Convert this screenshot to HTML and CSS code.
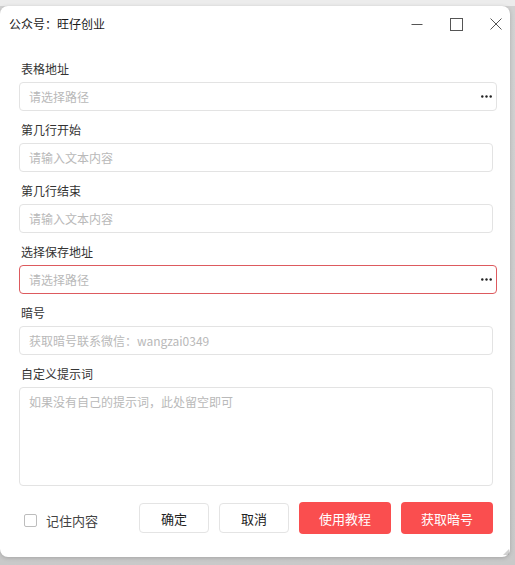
FILE: index.html
```html
<!DOCTYPE html>
<html lang="zh-CN">
<head>
<meta charset="utf-8">
<title>公众号：旺仔创业</title>
<link rel="stylesheet" href="styles.css">
</head>
<body>
<div class="window">
  <div class="titlebar">
    <div class="title">公众号：旺仔创业</div>
    <div class="controls">
      <svg class="ctl" width="12" height="12" viewBox="0 0 12 12"><path d="M0.5 6.5h11" stroke="#555" stroke-width="1"/></svg>
      <svg class="ctl" width="13" height="13" viewBox="0 0 13 13"><rect x="0.5" y="0.5" width="12" height="12" fill="none" stroke="#555" stroke-width="1"/></svg>
      <svg class="ctl" width="12" height="12" viewBox="0 0 12 12"><path d="M0.5 0.5l11 11M11.5 0.5l-11 11" stroke="#555" stroke-width="1"/></svg>
    </div>
  </div>
  <div class="form">
    <div class="field">
      <div class="label">表格地址</div>
      <div class="input wide"><span class="ph">请选择路径</span><svg class="dots" width="11" height="3" viewBox="0 0 11 3"><circle cx="1.3" cy="1.5" r="1.2"/><circle cx="5.5" cy="1.5" r="1.2"/><circle cx="9.7" cy="1.5" r="1.2"/></svg></div>
    </div>
    <div class="field">
      <div class="label">第几行开始</div>
      <div class="input"><span class="ph">请输入文本内容</span></div>
    </div>
    <div class="field">
      <div class="label">第几行结束</div>
      <div class="input"><span class="ph">请输入文本内容</span></div>
    </div>
    <div class="field">
      <div class="label">选择保存地址</div>
      <div class="input wide error"><span class="ph">请选择路径</span><svg class="dots" width="11" height="3" viewBox="0 0 11 3"><circle cx="1.3" cy="1.5" r="1.2"/><circle cx="5.5" cy="1.5" r="1.2"/><circle cx="9.7" cy="1.5" r="1.2"/></svg></div>
    </div>
    <div class="field">
      <div class="label">暗号</div>
      <div class="input"><span class="ph">获取暗号联系微信：wangzai0349</span></div>
    </div>
    <div class="field">
      <div class="label">自定义提示词</div>
      <div class="input textarea"><span class="ph">如果没有自己的提示词，此处留空即可</span></div>
    </div>
    <div class="actions">
      <label class="remember"><span class="box"></span><span>记住内容</span></label>
      <div class="buttons">
        <button class="btn plain">确定</button>
        <button class="btn plain">取消</button>
        <button class="btn primary">使用教程</button>
        <button class="btn primary">获取暗号</button>
      </div>
    </div>
  </div>
  <div class="grip"></div>
</div>
</body>
</html>
```
FILE: styles.css
```css
html, body {
  margin: 0;
  padding: 0;
}
body {
  width: 515px;
  height: 565px;
  overflow: hidden;
  background: linear-gradient(#ececec 0, #ececec 6px, #d2d2d2 6px, #c9c9c9 100%);
  font-family: "Noto Sans CJK SC", "Noto Sans", sans-serif;
  color: #333;
}
.window {
  position: relative;
  margin-top: 6px;
  width: 510px;
  height: 551px;
  background: #fff;
  border-radius: 8px;
  box-shadow: 0 1px 4px rgba(0,0,0,0.18);
  display: flex;
  flex-direction: column;
}
.titlebar {
  height: 36px;
  display: flex;
  align-items: center;
  justify-content: space-between;
  padding-left: 9px;
  padding-right: 8px;
}
.title {
  font-size: 12px;
  color: #1a1a1a;
  line-height: 16px;
}
.controls {
  display: flex;
  align-items: center;
  gap: 27px;
}
.ctl {
  display: block;
}
.form {
  padding: 17px 0 0 19px;
  display: flex;
  flex-direction: column;
}
.field {
  display: flex;
  flex-direction: column;
  gap: 3px;
  margin-bottom: 9px;
}
.label {
  height: 20px;
  line-height: 20px;
  font-size: 12px;
  color: #333;
  padding-left: 2px;
}
.input {
  box-sizing: border-box;
  width: 474px;
  height: 29px;
  border: 1px solid #e3e3e3;
  border-radius: 4px;
  display: flex;
  align-items: center;
  justify-content: space-between;
  padding: 0 4px 0 9px;
}
.input.wide {
  width: 478px;
}
.input.error {
  border-color: #dd5a5e;
}
.input.textarea {
  height: 99px;
  align-items: flex-start;
  padding-top: 5px;
}
.ph {
  font-size: 12px;
  color: #b9b9b9;
  line-height: 18px;
}
.dots {
  display: block;
  fill: #222;
}
.actions {
  margin-top: 7px;
  display: flex;
  align-items: center;
  justify-content: space-between;
  width: 474px;
  height: 32px;
}
.remember {
  display: flex;
  align-items: center;
  gap: 9px;
  padding-left: 5px;
  font-size: 13px;
  color: #444;
  margin-top: 4px;
}
.box {
  box-sizing: border-box;
  width: 13px;
  height: 13px;
  border: 1px solid #bdbdbd;
  border-radius: 2px;
}
.buttons {
  display: flex;
  align-items: center;
  gap: 10px;
}
.btn {
  font-family: inherit;
  font-size: 13px;
  border-radius: 4px;
  padding: 0;
  cursor: pointer;
}
.btn.plain {
  width: 70px;
  height: 30px;
  background: #fff;
  border: 1px solid #e4e4e4;
  color: #222;
}
.btn.primary {
  width: 92px;
  height: 32px;
  background: #fa4e4f;
  border: none;
  color: #fff;
}
.grip {
  position: absolute;
  right: 1px;
  bottom: 2px;
  width: 6px;
  height: 6px;
  background-image: radial-gradient(circle, #9a9a9a 0.6px, transparent 0.8px);
  background-size: 2px 2px;
  clip-path: polygon(100% 0, 100% 100%, 0 100%);
}
```
